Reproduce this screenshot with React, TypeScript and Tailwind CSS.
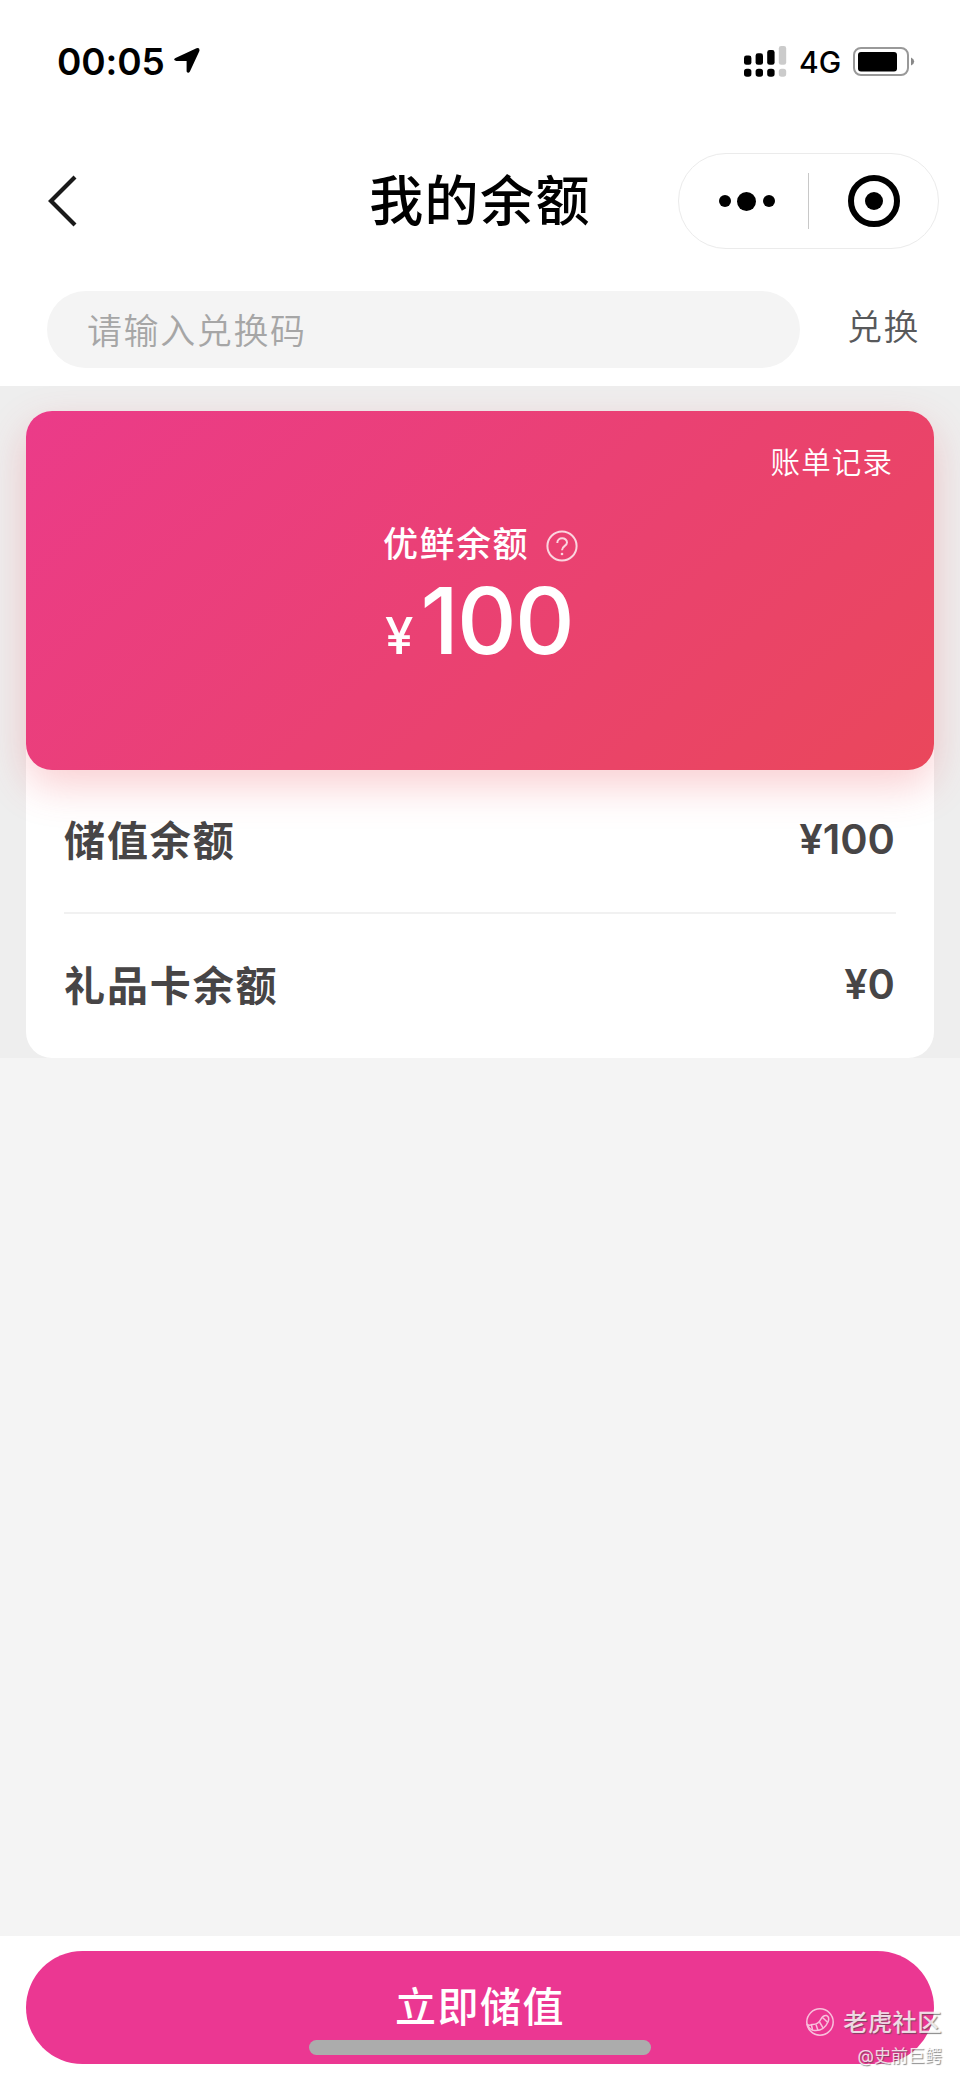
import type { ReactNode } from 'react'

interface BalanceRow {
  label: string
  amount: number
}

const rows: BalanceRow[] = [
  { label: '储值余额', amount: 100 },
  { label: '礼品卡余额', amount: 0 },
]

const signalBars = [
  { x: 0, top: 9.5, fill: '#000' },
  { x: 11.6, top: 7.3, fill: '#000' },
  { x: 23.2, top: 4, fill: '#000' },
  { x: 34.8, top: 0, fill: '#cbcbcb' },
]

function StatusBar() {
  return (
    <div className="flex h-[122px] items-center justify-between pl-[57px] pr-[45px]">
      <div className="flex items-center">
        <span className="w-[108px] text-[37px] font-semibold leading-none tracking-[-0.1px] text-black">00:05</span>
        <svg className="ml-[8px] h-7 w-7" viewBox="0 0 28 28">
          <path
            d="M2.5 11 L23.5 1.2 Q27 0 26.4 4 L16.9 24.4 Q15.2 27 13.6 24.4 V14 H3.3 Q-0.6 13 2.5 11Z"
            fill="#000"
          />
        </svg>
      </div>
      <div className="flex items-center">
        <svg className="h-[31px] w-[43px]" viewBox="0 0 43 31">
          {signalBars.map((bar) => (
            <g key={bar.x} fill={bar.fill}>
              <rect x={bar.x} y={bar.top} width="7.4" height={18.8 - bar.top} rx="2.4" />
              <rect x={bar.x} y="22.8" width="7.4" height="8" rx="2.8" />
            </g>
          ))}
        </svg>
        <span className="ml-[12px] w-[42px] pt-[2px] text-[30px] font-medium leading-none text-black">4G</span>
        <svg className="ml-[12px] h-[29px] w-[62px]" viewBox="0 0 62 29">
          <rect x="1" y="1" width="54" height="27" rx="7" fill="none" stroke="#999" strokeWidth="2" />
          <rect x="5" y="5" width="39" height="19.5" rx="3" fill="#000" />
          <path d="M58 10.5 Q61.2 12 61.2 14.5 T58 18.5Z" fill="#888" />
        </svg>
      </div>
    </div>
  )
}

function NavBar() {
  return (
    <div className="grid h-[158px] grid-cols-[320px_320px_320px] items-center">
      <svg className="ml-[47px] h-[54px] w-8" viewBox="0 0 32 54">
        <path d="M28 3 L4 27 L28 51" fill="none" stroke="#1a1a1a" strokeWidth="4.2" />
      </svg>
      <h1 className="pt-[1px] text-center text-[54px] font-medium leading-none tracking-[1.4px] text-black">我的余额</h1>
      <div className="ml-[38px] flex h-[96px] w-[261px] items-center rounded-full border border-[#ebebeb]">
        <div className="flex w-[129px] items-center justify-center gap-[6.5px] pl-[6px]">
          <i className="h-3 w-3 rounded-full bg-black" />
          <i className="h-[19px] w-[19px] rounded-full bg-black" />
          <i className="h-3 w-3 rounded-full bg-black" />
        </div>
        <div className="h-[56px] w-px bg-[#c8c8c8]" />
        <div className="ml-[39px] flex h-[52px] w-[52px] items-center justify-center rounded-full border-6 border-black">
          <i className="h-[18px] w-[18px] rounded-full bg-black" />
        </div>
      </div>
    </div>
  )
}

function RedeemBar() {
  return (
    <div className="flex h-[106px] items-start pl-[47px] pt-[11px]">
      <div className="flex h-[77px] w-[753px] items-center rounded-full bg-[#f4f4f4] pl-[40px] pt-[3px] text-[35px] font-[350] leading-none tracking-[1.6px] text-[#a6a6a6]">
        请输入兑换码
      </div>
      <button className="ml-[47px] mt-[17px] text-[35px] font-[350] leading-[38px] tracking-[1.6px] text-[#58595b]">兑换</button>
    </div>
  )
}

function BalanceCard() {
  return (
    <div className="relative h-[359px] rounded-[26px] bg-linear-[138deg,#eb3b89_0%,#ea4173_50%,#ea475b_100%] text-white shadow-[0_16px_40px_rgba(234,71,80,0.26)]">
      <div className="flex justify-end pr-[41px] pt-[36px] text-[29.5px] font-[350] leading-[30px] tracking-[1.1px]">账单记录</div>
      <div className="mt-[49px] flex h-[36px] items-center pl-[357px]">
        <span className="text-[35px] font-medium leading-none tracking-[1.5px]">优鲜余额</span>
        <svg className="ml-[17px] mt-[3px] h-8 w-8" viewBox="0 0 32 32" fill="none" stroke="#fbd5df" strokeWidth="2">
          <circle cx="16" cy="16" r="14.6" />
          <path d="M11.3 13 C11.3 6.8 21 7 21 12.5 C21 16 16 15.8 16 20.2" />
          <circle cx="16" cy="24" r="1.3" fill="#fbd5df" stroke="none" />
        </svg>
      </div>
      <div className="mt-[8px] flex items-baseline pl-[359px] font-medium leading-[100px]">
        <span className="text-[51px]">¥</span>
        <span className="ml-[7px] text-[92.5px] tracking-[-1.8px]">100</span>
      </div>
    </div>
  )
}

function Row({ label, children }: { label: string; children: ReactNode }) {
  return (
    <div className="flex h-[144px] items-center justify-between">
      <span className="text-[41px] font-bold leading-none tracking-[1.9px]">{label}</span>
      <span className="pb-[2px] pr-[1px] text-[41.5px] font-[560] leading-none">{children}</span>
    </div>
  )
}

function Watermark() {
  return (
    <div className="absolute bottom-[9px] right-[18px] flex flex-col items-end text-white/80 [text-shadow:1px_1px_1px_rgba(70,70,70,0.65)]">
      <div className="flex items-center">
        <svg className="h-[30px] w-[30px]" viewBox="0 0 30 30" fill="none" stroke="#f8c0dc" strokeWidth="1.5">
          <circle cx="15" cy="15" r="13.2" />
          <path d="M2 17 Q4 19 7 17.5 Q13 18 16 12 Q18 8 21.5 8.5 Q25 10 23 15 Q19 24 10 23.5 Q5 24 2 17Z" />
          <path d="M6.5 18 L7.5 23 M11 17.5 L13 23.5 M14.5 15 L18 20.8 M17.5 10.5 L22.8 15.5" />
        </svg>
        <span className="ml-[8px] text-[24.3px] font-medium leading-[36px] tracking-[0.4px]">老虎社区</span>
      </div>
      <span className="mt-[3px] text-[17px] leading-[27px]">@史前巨鳄</span>
    </div>
  )
}

export default function App() {
  return (
    <div
      lang="zh-CN"
      className="relative flex h-[2079px] w-[960px] flex-col overflow-hidden bg-[#f4f4f4] font-['Inter','Noto_Sans_CJK_SC',sans-serif]"
    >
      <header className="bg-white">
        <StatusBar />
        <NavBar />
        <RedeemBar />
      </header>

      <section className="h-[672px] overflow-hidden bg-[#eee] px-[26px] pt-[25px]">
        <div className="h-[647px] rounded-[26px] bg-white text-[#474546]">
          <BalanceCard />
          <div className="divide-y-2 divide-[#f1f1f1] px-[38px]">
            {rows.map((row) => (
              <Row key={row.label} label={row.label}>
                ¥{row.amount}
              </Row>
            ))}
          </div>
        </div>
      </section>

      <footer className="relative mt-auto h-[143px] bg-white px-[26px] pt-[15px]">
        <button className="flex h-[113px] w-full items-center justify-center rounded-full bg-[#eb3792] text-[41px] font-medium leading-none tracking-[1.5px] text-white">
          立即储值
        </button>
        <div className="absolute bottom-[24px] left-[309px] h-[15px] w-[342px] rounded-full bg-[#acacac]" />
        <Watermark />
      </footer>
    </div>
  )
}
